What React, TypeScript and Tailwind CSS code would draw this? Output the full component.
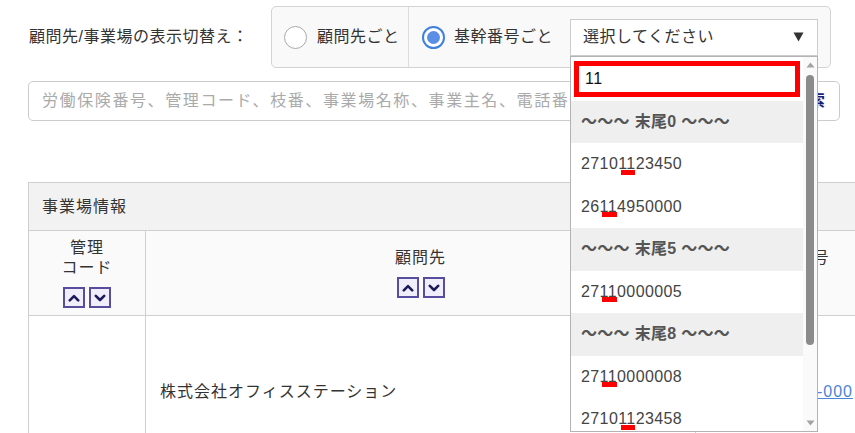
import React from "react";

type Row =
  | { kind: "group"; label: string }
  | { kind: "item"; pre: string; hit: string; post: string };

const rows: Row[] = [
  { kind: "group", label: "〜〜〜 末尾0 〜〜〜" },
  { kind: "item", pre: "2710", hit: "11", post: "23450" },
  { kind: "item", pre: "26", hit: "11", post: "4950000" },
  { kind: "group", label: "〜〜〜 末尾5 〜〜〜" },
  { kind: "item", pre: "27", hit: "11", post: "0000005" },
  { kind: "group", label: "〜〜〜 末尾8 〜〜〜" },
  { kind: "item", pre: "27", hit: "11", post: "0000008" },
  { kind: "item", pre: "2710", hit: "11", post: "23458" },
];

function Radio({ checked }: { checked?: boolean }) {
  if (checked) {
    return (
      <span className="flex h-[23px] w-[23px] shrink-0 items-center justify-center rounded-full border-2 border-[#3f7fdf] bg-white">
        <span className="h-[13px] w-[13px] rounded-full bg-[#5b8ee6]" />
      </span>
    );
  }
  return <span className="h-[23px] w-[23px] shrink-0 rounded-full border-[1.5px] border-[#a9a9a9] bg-white" />;
}

function SortButtons() {
  return (
    <div className="mt-[9px] flex gap-[4px]">
      <button className="flex h-[21px] w-[22px] items-center justify-center border-2 border-[#564d9f] bg-[#efeefa]">
        <svg width="12" height="8" viewBox="0 0 12 8">
          <path d="M1.8 6.4 L6 2.2 L10.2 6.4" stroke="#1d1a5c" strokeWidth="2.6" fill="none" strokeLinecap="round" strokeLinejoin="round" />
        </svg>
      </button>
      <button className="flex h-[21px] w-[22px] items-center justify-center border-2 border-[#564d9f] bg-[#efeefa]">
        <svg width="12" height="8" viewBox="0 0 12 8">
          <path d="M1.8 1.8 L6 6 L10.2 1.8" stroke="#1d1a5c" strokeWidth="2.6" fill="none" strokeLinecap="round" strokeLinejoin="round" />
        </svg>
      </button>
    </div>
  );
}

function Dropdown() {
  return (
    <div className="absolute left-[-1px] top-[36px] z-10 flex h-[376px] w-[248px] border border-[#b3b3b3] bg-white">
      <div className="w-[232px] shrink-0">
        <div className="ml-[3px] mt-[4px] flex h-[36px] w-[226px] items-center border-[5px] border-[#ff0000] bg-white pl-[6px] text-[16px] text-[#111]">
          11
        </div>
        <div className="mt-[4px]">
          {rows.map((r, i) =>
            r.kind === "group" ? (
              <div key={i} className="flex h-[42.5px] items-center bg-[#efefef] pl-[10px] text-[16px] font-bold tracking-[0.3px] text-[#555]">
                {r.label}
              </div>
            ) : (
              <div key={i} className="flex h-[42.5px] items-center pl-[10px] text-[16px] tracking-[0.4px] text-[#444]">
                <span>
                  {r.pre}
                  <span className="relative">
                    {r.hit}
                    <span className="absolute left-[2.5px] right-[0.5px] top-[calc(100%-2.5px)] h-[5px] bg-[#ff0000]" />
                  </span>
                  {r.post}
                </span>
              </div>
            )
          )}
        </div>
      </div>
      <div className="flex w-[14px] flex-col items-center bg-[#fafafa]">
        <svg className="mt-[5px]" width="9" height="6" viewBox="0 0 9 6">
          <path d="M4.5 0.5 L8.5 5.5 L0.5 5.5 Z" fill="#a3a3a3" />
        </svg>
        <div className="mt-[7px] h-[270px] w-[8px] rounded-full bg-[#8b8b8b]" />
        <div className="flex-1" />
        <svg className="mb-[5px]" width="9" height="6" viewBox="0 0 9 6">
          <path d="M0.5 0.5 L8.5 0.5 L4.5 5.5 Z" fill="#a3a3a3" />
        </svg>
      </div>
    </div>
  );
}

export default function App() {
  return (
    <div className="relative h-[433px] w-[855px] overflow-hidden bg-white pl-[28px] font-['Liberation_Sans','Noto_Sans_CJK_JP',sans-serif] text-[#333]">
      {/* display switch */}
      <div className="flex items-center pt-[6px]">
        <span className="w-[243px] shrink-0 pl-[1px] text-[16px] tracking-[0.5px]">顧問先/事業場の表示切替え：</span>
        <div className="flex h-[62px] w-[560px] shrink-0 items-center rounded-[5px] border border-[#d3d3d3] bg-[#f9f9f9]">
          <label className="flex h-full w-[137px] shrink-0 items-center gap-[10px] border-r border-[#dcdcdc] pl-[12px] text-[16px] tracking-[0.5px]">
            <Radio />
            <span>顧問先ごと</span>
          </label>
          <label className="flex h-full w-[161px] shrink-0 items-center gap-[9px] pl-[13px] text-[16px] tracking-[0.5px]">
            <Radio checked />
            <span>基幹番号ごと</span>
          </label>
          <div className="relative flex h-[37px] w-[248px] shrink-0 items-center justify-between border border-[#cccccc] bg-white pl-[12px] pr-[13px] text-[16px] tracking-[0.5px]">
            <span>選択してください</span>
            <svg width="11" height="10" viewBox="0 0 11 10">
              <path d="M0.5 0.5 L10.5 0.5 L5.5 9.5 Z" fill="#333" />
            </svg>
            <Dropdown />
          </div>
        </div>
      </div>

      {/* keyword search */}
      <div className="mt-[13px] flex h-[40px] w-[812px] items-center rounded-[5px] border border-[#cccccc] bg-white">
        <span className="whitespace-nowrap pl-[13px] text-[16px] tracking-[1.6px] text-[#aaaaaa]">
          労働保険番号、管理コード、枝番、事業場名称、事業主名、電話番号
        </span>
        <span className="ml-auto pr-[13px] text-[16px] font-bold tracking-[1px] text-[#1b1f7a]">検索</span>
      </div>

      {/* workplace table */}
      <div className="mt-[61px] w-[1100px] border-l border-t border-[#cfcfcf] text-[16px] tracking-[1px]">
        <div className="flex h-[48px] items-center border-b border-[#cfcfcf] bg-[#f2f2f2] pl-[13px]">事業場情報</div>
        <div className="flex h-[85px] border-b border-[#cfcfcf] bg-[#fafafa]">
          <div className="flex w-[117px] shrink-0 flex-col items-center justify-center border-r border-[#cfcfcf] leading-[20px]">
            <span>管理</span>
            <span>コード</span>
            <SortButtons />
          </div>
          <div className="flex w-[550px] shrink-0 flex-col items-center justify-center border-r border-[#cfcfcf] leading-[20px]">
            <span>顧問先</span>
            <SortButtons />
          </div>
          <div className="flex w-[166px] shrink-0 flex-col items-center justify-center border-r border-[#cfcfcf] leading-[20px]">
            <span>労働保険番号</span>
            <SortButtons />
          </div>
          <div className="flex-1" />
        </div>
        <div className="flex h-[152px] border-b border-[#cfcfcf] bg-white">
          <div className="w-[117px] shrink-0 border-r border-[#cfcfcf]" />
          <div className="flex w-[550px] shrink-0 items-center border-r border-[#cfcfcf] pl-[14px]">株式会社オフィスステーション</div>
          <div className="flex w-[166px] shrink-0 items-center justify-end border-r border-[#cfcfcf] pr-[8px]">
            <a className="text-[#4a86d6] underline">27101123450-000</a>
          </div>
          <div className="flex-1" />
        </div>
      </div>
    </div>
  );
}
